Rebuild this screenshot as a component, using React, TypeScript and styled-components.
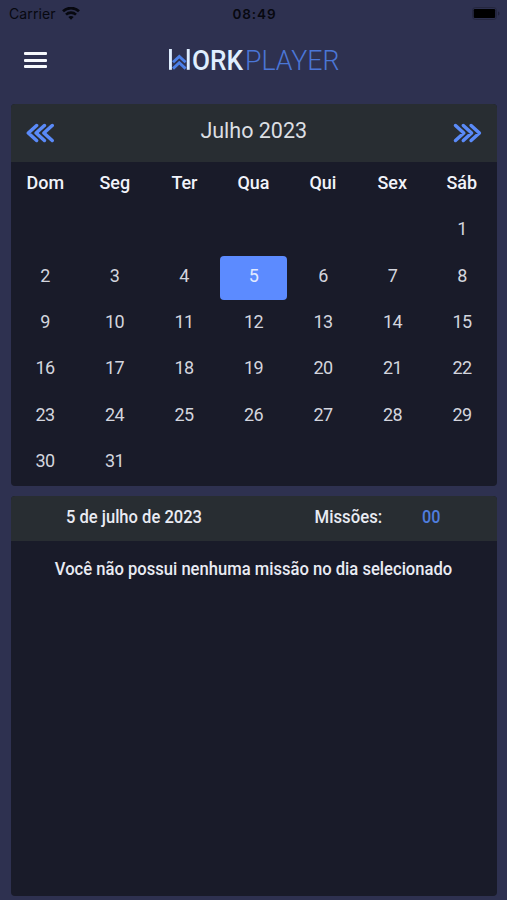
import React from "react";
import styled, { createGlobalStyle } from "styled-components";

const GlobalStyle = createGlobalStyle`
  * { box-sizing: border-box; }
  body {
    margin: 0;
    background: #2e3150;
    font-family: Roboto, "Liberation Sans", sans-serif;
    color: #e9ebf3;
  }
`;

const Screen = styled.main`
  display: flex;
  flex-direction: column;
  height: 900px;
  padding: 0 10px 4px 10.5px;
  overflow: hidden;
  background: #2e3150;
`;

const StatusBar = styled.div`
  display: grid;
  grid-template-columns: 1fr auto 1fr;
  align-items: center;
  height: 28px;
  margin: 0 -10px 0 -10.5px;
  padding: 0 7px 0 9px;
  font-family: Inter, sans-serif;
  font-size: 14px;
  color: #07080f;
`;

const Carrier = styled.div`
  display: flex;
  align-items: center;
  gap: 6px;
  letter-spacing: 0.1px;
  margin-top: -1px;
`;

const Clock = styled.time`
  font-weight: 600;
  font-size: 13.5px;
  letter-spacing: 0.9px;
`;

const BatterySlot = styled.div`
  display: flex;
  justify-content: flex-end;
  margin-top: -2px;
`;

const NavBar = styled.header`
  display: grid;
  grid-template-columns: 1fr auto 1fr;
  align-items: center;
  height: 64px;
  margin-bottom: 12px;
`;

const MenuButton = styled.button`
  display: flex;
  flex-direction: column;
  gap: 3.2px;
  width: 23px;
  margin-left: 13.5px;
  padding: 0;
  border: 0;
  background: none;
`;

const MenuLine = styled.span`
  height: 3px;
  border-radius: 1px;
  background: #f6f8fc;
`;

const Panel = styled.section<{ $fill?: boolean }>`
  display: flex;
  flex-direction: column;
  height: ${(p) => (p.$fill ? "auto" : "382px")};
  flex: ${(p) => (p.$fill ? "1" : "none")};
  margin-top: ${(p) => (p.$fill ? "10px" : "0")};
  border-radius: 4px;
  overflow: hidden;
  background: #191b29;
`;

const MonthHeader = styled.div`
  display: flex;
  justify-content: space-between;
  align-items: center;
  height: 58px;
  flex: none;
  padding: 0 15px;
  background: #282d32;
`;

const ArrowButton = styled.button`
  display: flex;
  padding: 0;
  border: 0;
  background: none;
`;

const Month = styled.h1`
  margin: 0 0 5px;
  font-size: 21.5px;
  font-weight: 400;
  line-height: 26px;
  color: #dcdfe3;
`;

const CalendarGrid = styled.div`
  display: grid;
  grid-template-columns: repeat(7, 1fr);
  grid-template-rows: 46.3px repeat(6, 46.3px);
  margin: 0 0.2px 0 -0.2px;
`;

const Weekday = styled.div`
  display: flex;
  justify-content: center;
  padding-top: 10px;
  font-size: 18.5px;
  font-weight: 500;
  line-height: 23px;
  color: #f1f3fa;
`;

const Day = styled.div<{ $selected?: boolean }>`
  display: flex;
  align-items: center;
  justify-content: center;
  margin: 1px;
  padding-bottom: 5px;
  border-radius: 4px;
  font-size: 18px;
  letter-spacing: -0.5px;
  color: ${(p) => (p.$selected ? "#e2eaff" : "#d3d5de")};
  background: ${(p) => (p.$selected ? "#5c8bff" : "transparent")};
`;

const MissionHeader = styled.div`
  display: grid;
  grid-template-columns: 247px 181px 1fr;
  align-items: center;
  height: 45px;
  padding-bottom: 4px;
  background: #282d32;
  font-size: 18px;
  font-weight: 500;
`;

const Condensed = styled.span<{ $scale: number; $accent?: boolean }>`
  display: inline-block;
  justify-self: center;
  white-space: nowrap;
  transform: scaleX(${(p) => p.$scale});
  color: ${(p) => (p.$accent ? "#4f7ddd" : "inherit")};
`;

const MissionCount = styled.div`
  margin-left: -18px;
`;

const EmptyMessage = styled.p`
  margin: 16px 0 0;
  text-align: center;
  font-size: 18px;
  font-weight: 500;
  line-height: 24px;
  color: #e9ebf3;
`;

const Wifi = () => (
  <svg width="18" height="14" viewBox="0 0 18 14" fill="none" stroke="#07080f">
    <path d="M1 4.3C5.5 0 12.5 0 17 4.3" strokeWidth="2.7" />
    <path d="M4 7.6c2.8-2.7 7.2-2.7 10 0" strokeWidth="2.6" />
    <path d="M6.3 10c1.5-1.4 3.9-1.4 5.4 0L9 12.8z" fill="#07080f" stroke="none" />
  </svg>
);

const Battery = () => (
  <svg width="28" height="13" viewBox="0 0 28 13">
    <rect x="0.5" y="0.5" width="24" height="12" rx="3" fill="none" stroke="#25273f" />
    <rect x="1.7" y="2" width="21.5" height="9" rx="1.2" fill="#000" />
    <path d="M26 4.5c2 .6 2 3.4 0 4z" fill="#20223a" />
  </svg>
);

const Logo = () => (
  <svg width="180" height="40" viewBox="-4 -7 180 40" aria-label="Work Player">
    <g fill="#dfeeff">
      <rect x="1" y="2" width="2.9" height="20.8" />
      <rect x="18.8" y="2" width="2.9" height="20.8" />
    </g>
    <path
      d="M5 15.2l6.3-5.8 6.3 5.8M5 21.6l6.3-5.8 6.3 5.8"
      fill="none"
      stroke="#4c80e8"
      strokeWidth="2.9"
    />
    <text x="24" y="22.6" fontSize="28.5" fontWeight="500" fill="#dfeeff" textLength="51" lengthAdjust="spacingAndGlyphs">
      ORK
    </text>
    <text x="77" y="22.6" fontSize="28.5" fontWeight="300" fill="#4b76d6" textLength="94.5" lengthAdjust="spacingAndGlyphs">
      PLAYER
    </text>
  </svg>
);

const Chevrons = ({ next }: { next?: boolean }) => (
  <svg width="29" height="20" viewBox="0 0 29 20" fill="none" stroke="#5a8af8" strokeWidth="3.5" strokeLinecap="round" strokeLinejoin="round">
    {next ? (
      <path d="M2.5 2.5l8.3 7.5-8.3 7.5M10.3 2.5l8.3 7.5-8.3 7.5M18.1 2.5l8.3 7.5-8.3 7.5" />
    ) : (
      <path d="M10.6 2.5L2.3 10l8.3 7.5M18.4 2.5L10.1 10l8.3 7.5M26.2 2.5L17.9 10l8.3 7.5" />
    )}
  </svg>
);

const weekdays = ["Dom", "Seg", "Ter", "Qua", "Qui", "Sex", "Sáb"];
const blanks = Array.from({ length: 6 }, (_, i) => i);
const days = Array.from({ length: 31 }, (_, i) => i + 1);

export default function App() {
  return (
    <>
      <GlobalStyle />
      <Screen>
        <StatusBar>
          <Carrier>
            Carrier
            <Wifi />
          </Carrier>
          <Clock>08:49</Clock>
          <BatterySlot>
            <Battery />
          </BatterySlot>
        </StatusBar>
        <NavBar>
          <MenuButton aria-label="Menu">
            <MenuLine />
            <MenuLine />
            <MenuLine />
          </MenuButton>
          <Logo />
        </NavBar>
        <Panel>
          <MonthHeader>
            <ArrowButton aria-label="Mês anterior">
              <Chevrons />
            </ArrowButton>
            <Month>Julho 2023</Month>
            <ArrowButton aria-label="Próximo mês">
              <Chevrons next />
            </ArrowButton>
          </MonthHeader>
          <CalendarGrid>
            {weekdays.map((name) => (
              <Weekday key={name}>
                <Condensed $scale={0.97}>{name}</Condensed>
              </Weekday>
            ))}
            {blanks.map((i) => (
              <Day key={`blank-${i}`} />
            ))}
            {days.map((day) => (
              <Day key={day} $selected={day === 5}>
                {day}
              </Day>
            ))}
          </CalendarGrid>
        </Panel>
        <Panel $fill>
          <MissionHeader>
            <Condensed $scale={0.92}>5 de julho de 2023</Condensed>
            <Condensed $scale={0.93}>Missões:</Condensed>
            <MissionCount>
              <Condensed $scale={0.9} $accent>
                00
              </Condensed>
            </MissionCount>
          </MissionHeader>
          <EmptyMessage>
            <Condensed $scale={0.922}>Você não possui nenhuma missão no dia selecionado</Condensed>
          </EmptyMessage>
        </Panel>
      </Screen>
    </>
  );
}
